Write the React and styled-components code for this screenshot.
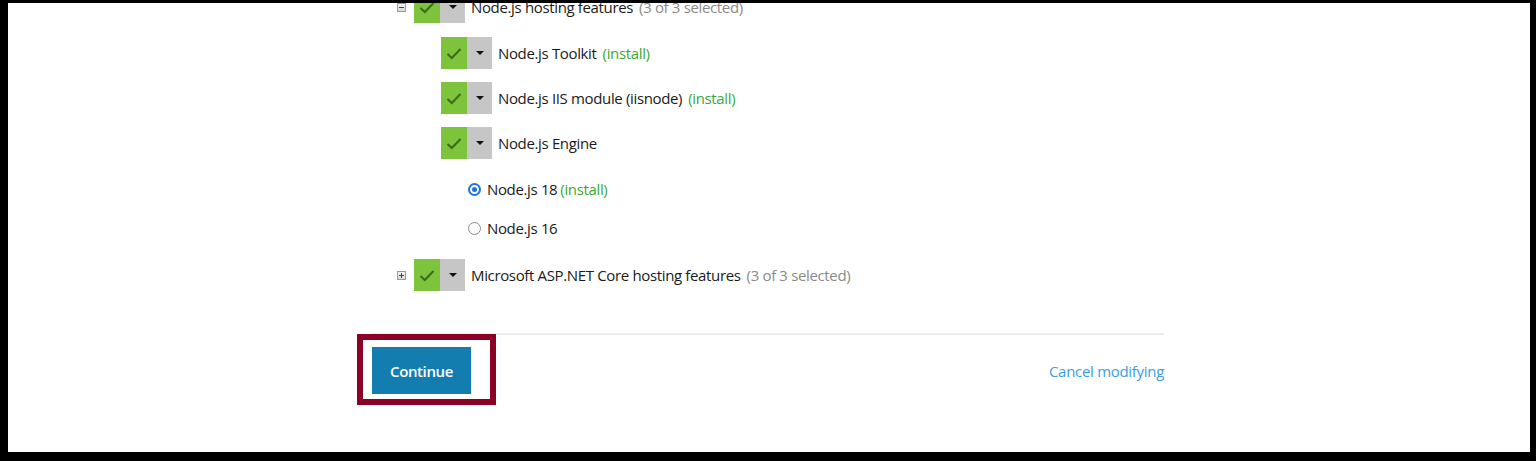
import React from 'react';
import styled, { createGlobalStyle } from 'styled-components';

const GlobalStyle = createGlobalStyle`
  html, body {
    margin: 0;
    padding: 0;
    background: #000;
  }
  body {
    font-family: "Open Sans", "Noto Sans", sans-serif;
  }
`;

const Frame = styled.div`
  position: relative;
  margin: 3px 6px 0 8px;
  height: 449px;
  background: #fff;
  overflow: hidden;
`;

const Content = styled.div`
  width: 792px;
  margin-left: 364px;
  margin-top: -12px;
`;

const Tree = styled.div`
  display: flex;
  flex-direction: column;
`;

const Row = styled.div`
  display: flex;
  align-items: center;
  height: ${(p) => p.$h || 32}px;
  margin-top: ${(p) => p.$mt || 0}px;
  padding-left: ${(p) => p.$indent}px;
`;

const Expander = styled.span`
  box-sizing: border-box;
  width: 9px;
  height: 9px;
  margin-right: 8px;
  border: 1px solid #9a9a9a;
  background: linear-gradient(#f4f4f4, #d8d8d8);
  position: relative;
  &::before {
    content: '';
    position: absolute;
    left: 1px;
    right: 1px;
    top: 3px;
    height: 1px;
    background: #444;
  }
  &::after {
    content: '';
    display: ${(p) => (p.$plus ? 'block' : 'none')};
    position: absolute;
    top: 1px;
    bottom: 1px;
    left: 3px;
    width: 1px;
    background: #444;
  }
`;

const CheckBox = styled.div`
  display: flex;
  height: 32px;
  margin-right: 6px;
`;

const CheckPart = styled.div`
  width: 26px;
  height: 32px;
  background: #7dc33b;
  display: flex;
  align-items: center;
  justify-content: center;
`;

const CaretPart = styled.div`
  width: 25px;
  height: 32px;
  background: #c6c6c6;
  display: flex;
  align-items: center;
  justify-content: center;
  &::after {
    content: '';
    border-left: 4px solid transparent;
    border-right: 4px solid transparent;
    border-top: 4px solid #111;
  }
`;

const Label = styled.span`
  font-size: 15px;
  letter-spacing: -0.35px;
  color: #1a1a1a;
  white-space: nowrap;
`;

const Note = styled.span`
  font-size: 15px;
  letter-spacing: -0.35px;
  margin-left: ${(p) => p.$ml ?? 6}px;
  color: ${(p) => (p.$kind === 'install' ? '#3aaa35' : '#8a8a8a')};
  white-space: nowrap;
`;

const Radio = styled.span`
  box-sizing: border-box;
  width: 13px;
  height: 13px;
  border-radius: 50%;
  margin-right: 6px;
  border: ${(p) => (p.$on ? '2px solid #1a73e8' : '1px solid #8a8a8a')};
  background: #fff;
  display: flex;
  align-items: center;
  justify-content: center;
  &::after {
    content: '';
    display: ${(p) => (p.$on ? 'block' : 'none')};
    width: 5px;
    height: 5px;
    border-radius: 50%;
    background: #1a73e8;
  }
`;

const Divider = styled.div`
  margin-top: 42px;
  height: 2px;
  background: #ececec;
`;

const Footer = styled.div`
  display: flex;
  align-items: center;
  justify-content: space-between;
  margin-top: 12px;
`;

const PrimaryButton = styled.button`
  width: 99px;
  height: 47px;
  border: none;
  background: #137db0;
  color: #fff;
  font-family: "Open Sans", "Noto Sans", sans-serif;
  font-size: 15px;
  font-weight: 600;
  letter-spacing: -0.4px;
  padding: 0;
  cursor: pointer;
`;

const LinkButton = styled.a`
  font-size: 15px;
  letter-spacing: -0.3px;
  color: #3d9de3;
  text-decoration: none;
  cursor: pointer;
`;

const Highlight = styled.div`
  position: absolute;
  left: 349px;
  top: 331px;
  width: 127px;
  height: 59px;
  border: 6px solid #8a0125;
  pointer-events: none;
`;

const Check = () => (
  <svg width="16" height="13" viewBox="0 0 16 13">
    <path d="M1.5 7 L5.8 11 L14.5 2" fill="none" stroke="#3c6a1c" strokeWidth="2" />
  </svg>
);

const TriCheck = () => (
  <CheckBox>
    <CheckPart>
      <Check />
    </CheckPart>
    <CaretPart />
  </CheckBox>
);

export default function App() {
  return (
    <>
      <GlobalStyle />
      <Frame>
        <Content>
          <Tree>
            <Row $indent={25}>
              <Expander />
              <TriCheck />
              <Label>Node.js hosting features</Label>
              <Note>(3 of 3 selected)</Note>
            </Row>
            <Row $indent={69} $mt={14}>
              <TriCheck />
              <Label>Node.js Toolkit</Label>
              <Note $kind="install">(install)</Note>
            </Row>
            <Row $indent={69} $mt={13}>
              <TriCheck />
              <Label>Node.js IIS module (iisnode)</Label>
              <Note $kind="install">(install)</Note>
            </Row>
            <Row $indent={69} $mt={13}>
              <TriCheck />
              <Label>Node.js Engine</Label>
            </Row>
            <Row $indent={96} $h={24} $mt={18}>
              <Radio $on />
              <Label>Node.js 18</Label>
              <Note $kind="install" $ml={3}>(install)</Note>
            </Row>
            <Row $indent={96} $h={24} $mt={15}>
              <Radio />
              <Label>Node.js 16</Label>
            </Row>
            <Row $indent={25} $mt={19}>
              <Expander $plus />
              <TriCheck />
              <Label>Microsoft ASP.NET Core hosting features</Label>
              <Note>(3 of 3 selected)</Note>
            </Row>
          </Tree>
          <Divider />
          <Footer>
            <PrimaryButton>Continue</PrimaryButton>
            <LinkButton>Cancel modifying</LinkButton>
          </Footer>
        </Content>
        <Highlight />
      </Frame>
    </>
  );
}
